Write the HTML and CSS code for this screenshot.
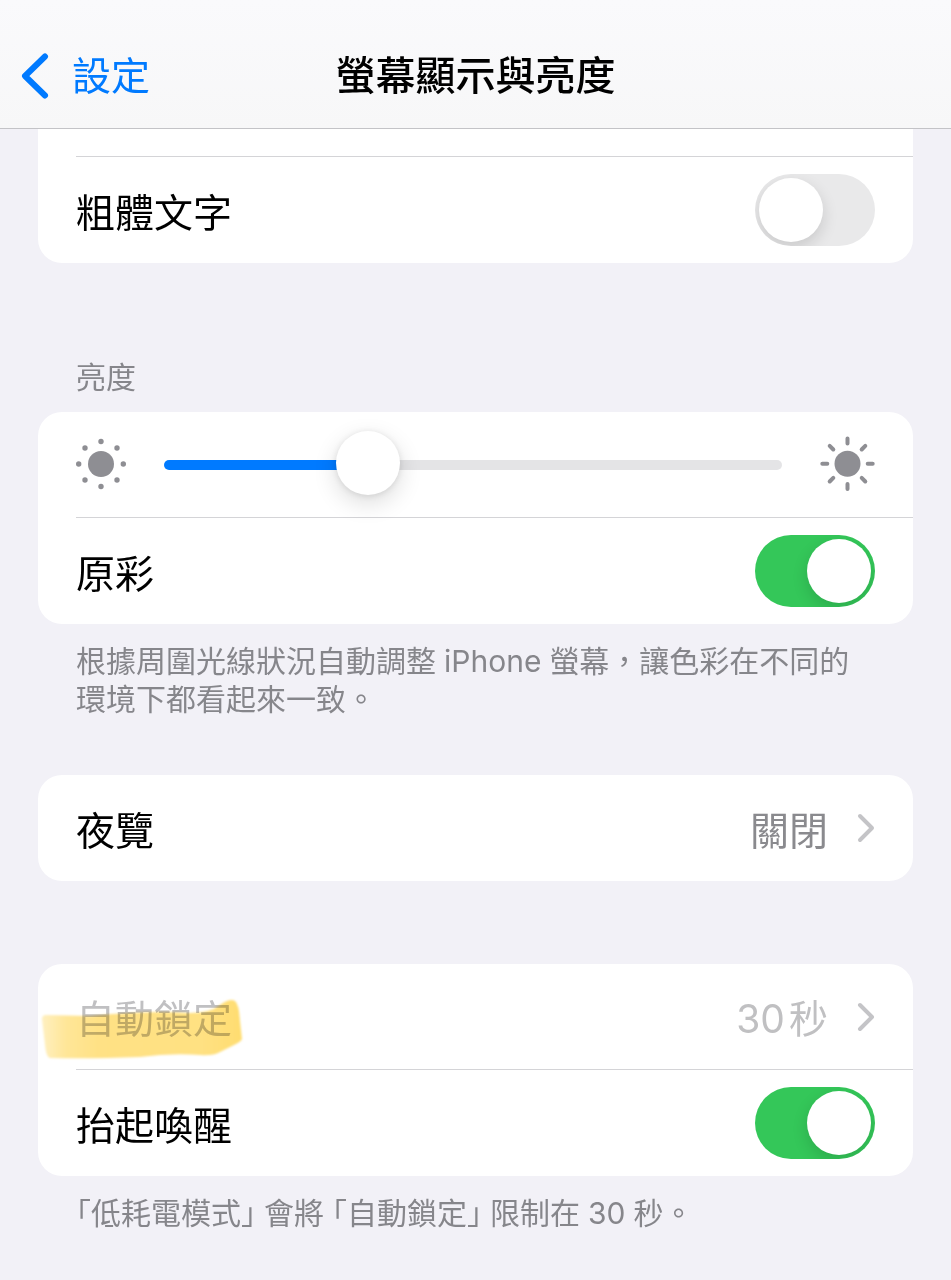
FILE: index.html
```html
<!DOCTYPE html>
<html lang="zh-Hant-TW">
<head>
<meta charset="utf-8">
<meta name="viewport" content="width=device-width, initial-scale=1">
<title>螢幕顯示與亮度</title>
<link rel="stylesheet" href="styles.css">
</head>
<body>
<header class="navbar">
  <a class="back" href="#settings">
    <svg class="back-icon" viewBox="0 0 30 46" aria-hidden="true"><path d="M25 3.500L5 23L25 42.500"/></svg>
    <span>設定</span>
  </a>
  <h1 class="title">螢幕顯示與亮度</h1>
</header>
<main class="content">
  <section class="card card-cut">
    <div class="row row-cut"></div>
    <div class="row">
      <label class="label" for="bold">粗體文字</label>
      <input class="switch" id="bold" type="checkbox" role="switch">
    </div>
  </section>

  <h2 class="heading" id="brightness-heading">亮度</h2>
  <section class="card">
    <div class="row slider-row">
      <svg class="sun-dim" viewBox="-25 -24 50 50" aria-hidden="true">
        <circle r="13"/>
        <circle cx="0" cy="-22.500" r="2.700"/><circle cx="16" cy="-16" r="2.700"/>
        <circle cx="22.300" cy="0" r="2.700"/><circle cx="16" cy="16" r="2.700"/>
        <circle cx="0" cy="22.500" r="2.700"/><circle cx="-16" cy="16" r="2.700"/>
        <circle cx="-22.300" cy="0" r="2.700"/><circle cx="-16" cy="-16" r="2.700"/>
      </svg>
      <input class="slider" type="range" min="0" max="100" value="31" aria-labelledby="brightness-heading">
      <svg class="sun-bright" viewBox="-27.500 -26.700 55 55" aria-hidden="true">
        <circle r="13"/>
        <path d="M0-25.200V-20.200M0 20.200V25.200M-25.200 0H-20.200M20.200 0H25.200M-17.800-17.800L-14.200-14.200M14.200 14.200L17.800 17.800M-17.800 17.800L-14.200 14.200M14.200-14.200L17.800-17.800"/>
      </svg>
    </div>
    <div class="row">
      <label class="label" for="truetone">原彩</label>
      <input class="switch" id="truetone" type="checkbox" role="switch" checked>
    </div>
  </section>
  <p class="note">根據周圍光線狀況自動調整<span class="latin">iPhone</span>螢幕，讓色彩在不同的環境下都看起來一致。</p>

  <section class="card card-night">
    <a class="row" href="#night-shift">
      <span class="label">夜覽</span>
      <span class="value">關閉</span>
      <svg class="chevron" viewBox="0 0 18 30" aria-hidden="true"><path d="M3 3L15 15L3 27"/></svg>
    </a>
  </section>

  <section class="card card-lock">
    <a class="row disabled" href="#auto-lock" aria-disabled="true">
      <span class="label">自動鎖定</span>
      <span class="value"><span class="number">30</span>秒</span>
      <svg class="chevron" viewBox="0 0 18 30" aria-hidden="true"><path d="M3 3L15 15L3 27"/></svg>
    </a>
    <div class="row">
      <label class="label" for="raise">抬起喚醒</label>
      <input class="switch" id="raise" type="checkbox" role="switch" checked>
    </div>
    <svg class="marker" viewBox="0 0 206 64" aria-hidden="true">
      <defs>
        <linearGradient id="ink" x1="0" x2="1" y1="0" y2="0">
          <stop offset="0" stop-color="#fff0c0"/>
          <stop offset="0.120" stop-color="#ffe698"/>
          <stop offset="0.280" stop-color="#ffe185"/>
          <stop offset="0.800" stop-color="#ffe182"/>
          <stop offset="1" stop-color="#ffdd70"/>
        </linearGradient>
        <filter id="soft"><feGaussianBlur stdDeviation="0.800"/></filter>
      </defs>
      <path fill="url(#ink)" filter="url(#soft)" d="M2 22Q2 18 6 18L50 19Q110 13 150 16Q170 16 180 8Q190 1 195 4Q199 7 200 24L202 42Q201 45 192 49L180 55Q173 59 160 58Q130 56 100 60Q50 62 10 61Q6 60 5 48Z"/>
    </svg>
  </section>
  <p class="note"><span class="open">「</span>低耗電模式<span class="close">」</span>會將<span class="open open-inner">「</span>自動鎖定<span class="close">」</span>限制在<span class="latin">30</span>秒。</p>
</main>
</body>
</html>
```
FILE: styles.css
```css
* {
  box-sizing: border-box;
}

body {
  margin: 0;
  background: #f2f1f7;
  color: #000;
  font-family: Inter, "Noto Sans CJK TC", sans-serif;
  font-size: 39px;
  line-height: 56px;
}

a {
  color: inherit;
  text-decoration: none;
}

.navbar {
  display: grid;
  grid-template-columns: 1fr auto 1fr;
  align-items: center;
  height: 129px;
  padding: 24px 20px 0;
  border-bottom: 1px solid #c3c3c7;
  background: linear-gradient(#fafafc, #f7f7f8);
}

.back {
  display: flex;
  align-items: center;
  gap: 22px;
  color: #007aff;
}

.back-icon {
  width: 30px;
  height: 46px;
  fill: none;
  stroke: currentColor;
  stroke-width: 6;
  stroke-linecap: round;
  stroke-linejoin: round;
}

.title {
  margin: 0;
  font-size: 40px;
  font-weight: 500;
}

.content {
  padding: 0 38px 32px;
}

.card {
  position: relative;
  border-radius: 24px;
  background: #fff;
}

.card-cut {
  border-radius: 0 0 24px 24px;
}

.row {
  display: flex;
  align-items: center;
  height: 106px;
  margin-left: 38px;
  padding-right: 38px;
}

.row-cut,
.slider-row,
.row.disabled {
  border-bottom: 1px solid #d4d4d7;
}

.row-cut {
  height: 28px;
}

.label,
.value {
  padding-top: 5px;
}

.label {
  flex: 1;
}

.value {
  color: #8a8a8e;
}

.number {
  margin-right: 4px;
}

.chevron {
  width: 18px;
  height: 30px;
  margin-left: 29px;
  fill: none;
  stroke: #c4c4c7;
  stroke-width: 4;
  stroke-linecap: round;
  stroke-linejoin: round;
}

.disabled .label,
.disabled .value {
  color: #c0c0c2;
}

.switch {
  appearance: none;
  width: 120px;
  height: 72px;
  margin: 0;
  padding: 4px;
  border-radius: 36px;
  background: #e9e9ea;
  overflow: hidden;
}

.switch::before {
  content: "";
  display: block;
  width: 64px;
  height: 64px;
  border-radius: 50%;
  background: #fff;
  box-shadow: 0 6px 16px rgba(0, 0, 0, 0.14);
}

.switch:checked {
  background: #34c759;
}

.switch:checked::before {
  margin-left: auto;
}

.heading {
  margin: 95px 38px 16px;
  color: #86868b;
  font-size: 30px;
  font-weight: 400;
  line-height: 38px;
}

.slider-row {
  gap: 38px;
}

.sun-dim {
  flex: none;
  width: 50px;
  height: 50px;
  overflow: visible;
  fill: #8e8e93;
}

.sun-bright {
  flex: none;
  width: 55px;
  height: 55px;
  overflow: visible;
  fill: #8e8e93;
  stroke: #8e8e93;
  stroke-width: 4;
  stroke-linecap: round;
}

.sun-bright circle {
  stroke: none;
}

.slider {
  appearance: none;
  flex: 1;
  min-width: 0;
  height: 64px;
  margin: 0;
  background: transparent;
}

.slider::-webkit-slider-runnable-track {
  height: 10px;
  border-radius: 5px;
  background: linear-gradient(90deg, #007aff 33%, #e4e4e6 33%);
}

.slider::-webkit-slider-thumb {
  appearance: none;
  width: 64px;
  height: 64px;
  margin-top: -29px;
  border-radius: 50%;
  background: #fff;
  box-shadow: 0 8px 24px rgba(0, 0, 0, 0.14), 0 1px 6px rgba(0, 0, 0, 0.1);
}

.note {
  margin: 18px 38px 0;
  color: #86868b;
  font-size: 30px;
  line-height: 38px;
}

.latin {
  margin: 0 8px;
}

.open,
.close {
  font-feature-settings: "halt";
}

.open-inner {
  margin-left: 8px;
}

.close {
  margin-right: 8px;
}

.card-night {
  margin-top: 57px;
}

.card-lock {
  margin-top: 83px;
}

.marker {
  position: absolute;
  top: 33px;
  left: 2px;
  width: 206px;
  height: 64px;
  mix-blend-mode: multiply;
  pointer-events: none;
}
```
